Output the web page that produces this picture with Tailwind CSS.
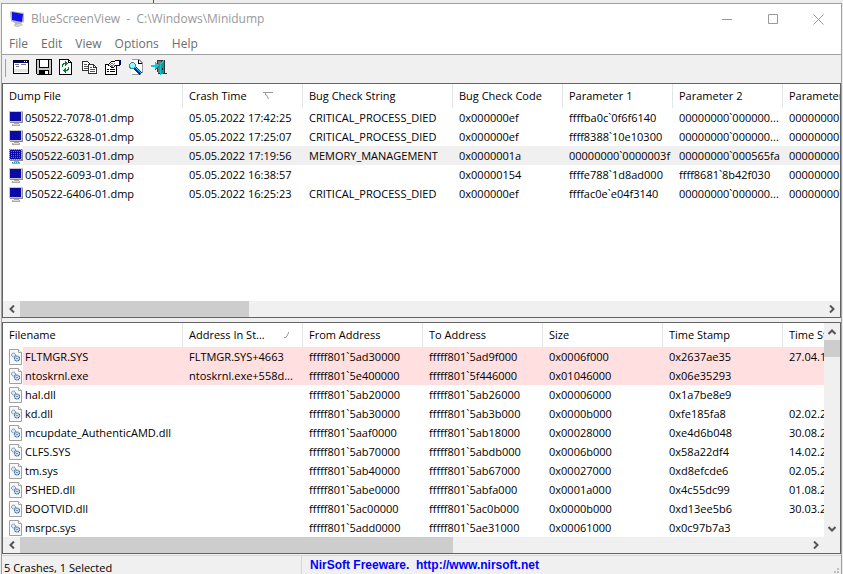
<!DOCTYPE html>
<html lang="en">
<head>
  <meta charset="UTF-8">
  <meta name="viewport" content="width=device-width, initial-scale=1.0">
  <title>BlueScreenView</title>
  <script src="https://cdn.jsdelivr.net/npm/@tailwindcss/browser@4"></script>
</head>
<body class="h-screen overflow-hidden bg-[#ececec] font-['Open_Sans',sans-serif] text-[11px] leading-4 text-black flex flex-col">
  <svg width="0" height="0" class="absolute" aria-hidden="true">
    <symbol id="monitor" viewBox="0 0 14 16">
      <path d="M0 1h14v11H0z" fill="#c9c6c0"/>
      <path d="M1 2h11v9H1z" fill="#0a0aa8"/>
      <path d="M1 12h13v1H1zM13 2h1v10h-1z" fill="#8d8b87"/>
      <path d="M5 13h5v1H5zM3 14h8v2H3z" fill="#aaa8a4"/>
      <path d="M4 14h6v1H4z" fill="#dedcd8"/>
    </symbol>
    <symbol id="monitor-selected" viewBox="0 0 14 16">
      <use href="#monitor"/>
      <path d="M0 1.5h14M0 3.5h14M0 5.5h14M0 7.5h14M0 9.5h14M0 11.5h14M3 14.5h8" stroke="#1f86dc" stroke-dasharray="1 1" fill="none"/>
    </symbol>
    <symbol id="module" viewBox="0 0 13 16">
      <path d="M.5 .5h9l3 3v12H.5z" fill="#f8f8f8" stroke="#a0a0a0"/>
      <path d="M9.500 .5v3h3" fill="#fff" stroke="#a0a0a0"/>
      <circle cx="4.500" cy="6" r="2" fill="#dcebf5" stroke="#4a76a0" stroke-dasharray="1 .5"/>
      <circle cx="8" cy="9.500" r="2.500" fill="#dcebf5" stroke="#35648f" stroke-width="1.200" stroke-dasharray="1.200 .5"/>
      <circle cx="8" cy="9.500" r=".7" fill="#35648f"/>
    </symbol>
  </svg>

  <div class="h-[3px] shrink-0 pl-[153px]"><div class="h-full w-px bg-gray-600"></div></div>

  <main class="mx-px min-h-0 flex-1 flex flex-col border border-b-0 border-[#a0a0a0] bg-[#f0f0f0]">
    <header class="bg-white">
      <div class="flex h-[30px] items-center pl-2">
        <svg width="15" height="16" viewBox="0 0 15 16" aria-hidden="true">
          <path d="M0 1l2-1 12 2v9l-3 1 2 2-5 2-4-1 1-3-4-2z" fill="#b9b9b4"/>
          <path d="M2 1l11 2-1 8-10-2z" fill="#1010e8"/>
          <path d="M5 14l5-1 2 1-4 1z" fill="#dededa"/>
        </svg>
        <h1 class="ml-[6px] flex-1 whitespace-pre text-[12px] text-[#999]">BlueScreenView  -  C:\Windows\Minidump</h1>
        <button aria-label="Minimize" class="flex h-full w-[46px] items-center justify-center"><svg width="10" height="11"><path d="M0 5.500h10" stroke="#999"/></svg></button>
        <button aria-label="Maximize" class="flex h-full w-[46px] items-center justify-center"><svg width="10" height="10"><path d="M.5 .5h9v9h-9z" fill="none" stroke="#999"/></svg></button>
        <button aria-label="Close" class="flex h-full w-[45px] items-center justify-center"><svg width="11" height="11"><path d="M.5 .5l10 10M10.500 .5l-10 10" stroke="#999"/></svg></button>
      </div>
      <nav class="flex h-5 items-center gap-[13px] pl-[7px] text-[12px] text-[#6d6d6d]">
        <button>File</button>
        <button>Edit</button>
        <button>View</button>
        <button>Options</button>
        <button>Help</button>
      </nav>
    </header>

    <div class="flex h-[29px] shrink-0 items-start border-t border-[#a0a0a0] pt-1 pl-[3px]">
      <div class="mr-[7px] h-[18px] w-px bg-[#a0a0a0]"></div>
      <div class="flex gap-[7px]">
        <button aria-label="Advanced options"><svg width="16" height="16" shape-rendering="crispEdges">
          <path d="M0 1h16v14H0z" fill="#000"/><path d="M1 2h14v12H1z" fill="#fff"/><path d="M1 2h14v2H1z" fill="#000080"/>
          <path d="M11 2h1v1h-1zM13 2h1v1h-1z" fill="#fff"/><path d="M2 5h4v1H2zM3 7h3v1H3zM8 5h5v1H8z" fill="#777"/><path d="M1 9h14v4H1z" fill="#e4e4e4"/><path d="M1 9h14v1H1z" fill="#fff"/>
        </svg></button>
        <button aria-label="Save"><svg width="16" height="16" shape-rendering="crispEdges">
          <path d="M0 0h16v16H1v-1H0z" fill="#000"/><path d="M1 1h2v8h10V1h2v14H1z" fill="#c8c8c8"/><path d="M4 1h8v7H4z" fill="#fff"/><path d="M3 11h10v5H3z" fill="#000"/><path d="M9 12h3v3H9z" fill="#fff"/>
        </svg></button>
        <button aria-label="Refresh"><svg width="16" height="16" shape-rendering="crispEdges">
          <path d="M.5 .5h9l3 3v12H.5z" fill="#fff" stroke="#000"/><path d="M9.500 0v3.500H13" fill="none" stroke="#000"/>
          <path d="M3 8V5h1V4h2V2h1v1h1v1h1v1H8v1H7v1H6V5H5v1H4v2zM10 8v3H9v1H7v2H6v-1H5v-1H4v-1h1v-1h1V9h1v2h1v-1h1V8z" fill="#008030"/>
        </svg></button>
        <button aria-label="Copy"><svg width="16" height="16" shape-rendering="crispEdges">
          <path d="M.5 2.500h5l3 3v6h-8z" fill="#fff" stroke="#333"/><path d="M2 5h3v1H2zM2 7h4v1H2zM2 9h4v1H2z" fill="#555"/>
          <path d="M6.500 5.500h5l3 3v6h-8z" fill="#fff" stroke="#333"/><path d="M11.500 5v3.500H15" fill="none" stroke="#333"/><path d="M8 8h2v1H8zM8 10h5v1H8zM8 12h5v1H8z" fill="#555"/>
        </svg></button>
        <button aria-label="Properties"><svg width="16" height="16" shape-rendering="crispEdges">
          <path d="M.5 5.500h11v10H.5z" fill="#fff" stroke="#000"/><path d="M2 10h2v1H2zM5 10h5v1H5zM2 12h2v1H2zM5 12h5v1H5z" fill="#000"/>
          <path d="M3 6l4-4h3l1-1h3v5h-3L8 9z" fill="#fff" stroke="#000"/><path d="M5 5l3 3M7 4l3 3M4 7l3-3M6 8l4-4" stroke="#777"/><path d="M14 1h2v5h-2z" fill="#000080"/>
        </svg></button>
        <button aria-label="Find"><svg width="16" height="16" shape-rendering="crispEdges">
          <path d="M3 1h8l3 3v11H3z" fill="#fff"/><path d="M4 .5h7l3 3V14M4 15.500h9" fill="none" stroke="#999"/><path d="M10.500 1v3H14" fill="none" stroke="#000"/>
          <circle cx="4.500" cy="6.500" r="3" fill="#8ff" stroke="#378a9a"/><path d="M7 9l6 6" stroke="#0030b0" stroke-width="3"/><path d="M7 8l6 6" stroke="#3cf"/>
        </svg></button>
        <button aria-label="Exit"><svg width="16" height="16" shape-rendering="crispEdges">
          <path d="M6 1h8v13h2v1H7v-2H6z" fill="#333"/><path d="M7 2h3v12H7z" fill="#777"/><path d="M13 1v13l-4 2V4z" fill="#00a0a0"/><path d="M9 4l4-3v1l-3 3v11H9z" fill="#0cc"/><path d="M11 9h1v2h-1z" fill="#000"/>
          <path d="M0 6h4V3l5 4-5 4V8H0z" fill="#00d0e0"/><path d="M4 10v1l5-4H8z" fill="#007080"/>
        </svg></button>
      </div>
    </div>

    <section class="flex min-h-0 flex-1 flex-col border border-[#646464] bg-white">
      <div class="min-h-0 flex-1 overflow-hidden">
        <table class="w-full table-fixed border-separate border-spacing-0 whitespace-nowrap text-left">
          <colgroup><col class="w-[180px]"><col class="w-[120px]"><col class="w-[150px]"><col class="w-[110px]"><col class="w-[110px]"><col class="w-[110px]"><col></colgroup>
          <thead><tr class="h-6">
            <th class="border-r border-[#e5e5e5] p-0 pl-[6px] font-normal">Dump File</th>
            <th class="border-r border-[#e5e5e5] p-0 pl-[6px] font-normal"><div class="flex items-center gap-4">Crash Time<svg width="11" height="8"><path d="M0 .5h10M2.500 1v2h1l2 4" fill="none" stroke="#999"/></svg></div></th>
            <th class="border-r border-[#e5e5e5] p-0 pl-[6px] font-normal">Bug Check String</th>
            <th class="border-r border-[#e5e5e5] p-0 pl-[6px] font-normal">Bug Check Code</th>
            <th class="border-r border-[#e5e5e5] p-0 pl-[6px] font-normal">Parameter 1</th>
            <th class="border-r border-[#e5e5e5] p-0 pl-[6px] font-normal">Parameter 2</th>
            <th class="overflow-hidden p-0 pl-[6px] font-normal">Parameter 3</th>
          </tr></thead>
          <tbody id="crashes"></tbody>
        </table>
      </div>
      <div class="flex h-4 shrink-0 bg-[#f0f0f0]">
        <button aria-label="Scroll left" class="flex w-[17px] items-center justify-center"><svg width="6" height="8"><path d="M5 .5L1.500 4 5 7.500" fill="none" stroke="#555" stroke-width="2"/></svg></button>
        <div class="flex-1"><div class="h-full w-[28.500%] bg-[#cdcdcd]"></div></div>
        <button aria-label="Scroll right" class="flex w-[17px] items-center justify-center"><svg width="6" height="8"><path d="M1 .5L4.500 4 1 7.500" fill="none" stroke="#555" stroke-width="2"/></svg></button>
      </div>
    </section>

    <section class="mt-1 flex shrink-0 flex-col border border-[#646464] bg-white">
      <div class="flex">
        <div class="min-w-0 flex-1 overflow-hidden">
          <table class="w-full table-fixed border-separate border-spacing-0 whitespace-nowrap text-left">
            <colgroup><col class="w-[180px]"><col class="w-[120px]"><col class="w-[120px]"><col class="w-[120px]"><col class="w-[120px]"><col class="w-[120px]"><col></colgroup>
            <thead><tr class="h-6">
              <th class="border-r border-[#e5e5e5] p-0 pl-[6px] font-normal">Filename</th>
              <th class="border-r border-[#e5e5e5] p-0 pl-[6px] font-normal"><div class="flex items-center gap-[18px]">Address In St...<svg width="6" height="6"><path d="M5.500 0v1L3 5.500H1" fill="none" stroke="#999"/></svg></div></th>
              <th class="border-r border-[#e5e5e5] p-0 pl-[6px] font-normal">From Address</th>
              <th class="border-r border-[#e5e5e5] p-0 pl-[6px] font-normal">To Address</th>
              <th class="border-r border-[#e5e5e5] p-0 pl-[6px] font-normal">Size</th>
              <th class="border-r border-[#e5e5e5] p-0 pl-[6px] font-normal">Time Stamp</th>
              <th class="overflow-hidden p-0 pl-[6px] font-normal">Time String</th>
            </tr></thead>
            <tbody id="modules"></tbody>
          </table>
        </div>
        <div class="flex w-4 flex-col bg-[#f0f0f0]">
          <button aria-label="Scroll up" class="flex h-[17px] items-center justify-center"><svg width="8" height="6"><path d="M.5 5L4 1.500 7.500 5" fill="none" stroke="#555" stroke-width="2"/></svg></button>
          <div class="flex-1"><div class="h-[17px] bg-[#cdcdcd]"></div></div>
          <button aria-label="Scroll down" class="flex h-[17px] items-center justify-center"><svg width="8" height="6"><path d="M.5 1L4 4.500 7.500 1" fill="none" stroke="#555" stroke-width="2"/></svg></button>
        </div>
      </div>
      <div class="flex h-4 bg-[#f0f0f0] pr-4">
        <button aria-label="Scroll left" class="flex w-[17px] items-center justify-center"><svg width="6" height="8"><path d="M5 .5L1.500 4 5 7.500" fill="none" stroke="#555" stroke-width="2"/></svg></button>
        <div class="flex-1"><div class="h-full w-[55%] bg-[#cdcdcd]"></div></div>
        <button aria-label="Scroll right" class="flex w-[17px] items-center justify-center"><svg width="6" height="8"><path d="M1 .5L4.500 4 1 7.500" fill="none" stroke="#555" stroke-width="2"/></svg></button>
      </div>
    </section>

    <footer class="mt-px flex h-[19px] shrink-0 border-t border-[#d7d7d7]">
      <div class="w-[300px] border-r border-[#d7d7d7] pt-1 pl-[2px]">5 Crashes, 1 Selected</div>
      <a href="http://www.nirsoft.net" class="flex-1 whitespace-pre pt-px pl-2 font-['Liberation_Sans',sans-serif] text-[12px] font-bold text-[#0000ff]">NirSoft Freeware.  http://www.nirsoft.net</a>
      <svg width="6" height="6" class="mr-px mt-3" fill="#bfbfbf"><path d="M3 0h2v2H3zM0 3h2v2H0zM3 3h2v2H3z"/></svg>
    </footer>
  </main>

  <script>
    const crashes = [
      ['050522-7078-01.dmp', '05.05.2022 17:42:25', 'CRITICAL_PROCESS_DIED', '0x000000ef', 'ffffba0c`0f6f6140', '00000000`000000...', '00000000`00000000'],
      ['050522-6328-01.dmp', '05.05.2022 17:25:07', 'CRITICAL_PROCESS_DIED', '0x000000ef', 'ffff8388`10e10300', '00000000`000000...', '00000000`00000000'],
      ['050522-6031-01.dmp', '05.05.2022 17:19:56', 'MEMORY_MANAGEMENT', '0x0000001a', '00000000`0000003f', '00000000`000565fa', '00000000`00000000'],
      ['050522-6093-01.dmp', '05.05.2022 16:38:57', '', '0x00000154', 'ffffe788`1d8ad000', 'ffff8681`8b42f030', '00000000`00000000'],
      ['050522-6406-01.dmp', '05.05.2022 16:25:23', 'CRITICAL_PROCESS_DIED', '0x000000ef', 'ffffac0e`e04f3140', '00000000`000000...', '00000000`00000000']
    ];
    const modules = [
      ['FLTMGR.SYS', 'FLTMGR.SYS+4663', 'fffff801`5ad30000', 'fffff801`5ad9f000', '0x0006f000', '0x2637ae35', '27.04.1990'],
      ['ntoskrnl.exe', 'ntoskrnl.exe+558d...', 'fffff801`5e400000', 'fffff801`5f446000', '0x01046000', '0x06e35293', ''],
      ['hal.dll', '', 'fffff801`5ab20000', 'fffff801`5ab26000', '0x00006000', '0x1a7be8e9', ''],
      ['kd.dll', '', 'fffff801`5ab30000', 'fffff801`5ab3b000', '0x0000b000', '0xfe185fa8', '02.02.2105'],
      ['mcupdate_AuthenticAMD.dll', '', 'fffff801`5aaf0000', 'fffff801`5ab18000', '0x00028000', '0xe4d6b048', '30.08.2091'],
      ['CLFS.SYS', '', 'fffff801`5ab70000', 'fffff801`5abdb000', '0x0006b000', '0x58a22df4', '14.02.2017'],
      ['tm.sys', '', 'fffff801`5ab40000', 'fffff801`5ab67000', '0x00027000', '0xd8efcde6', '02.05.2085'],
      ['PSHED.dll', '', 'fffff801`5abe0000', 'fffff801`5abfa000', '0x0001a000', '0x4c55dc99', '01.08.2010'],
      ['BOOTVID.dll', '', 'fffff801`5ac00000', 'fffff801`5ac0b000', '0x0000b000', '0xd13ee5b6', '30.03.2081'],
      ['msrpc.sys', '', 'fffff801`5add0000', 'fffff801`5ae31000', '0x00061000', '0x0c97b7a3', '']
    ];

    function fillRows(id, rows, icon, color) {
      document.getElementById(id).innerHTML = rows.map((row, i) => {
        const bg = color(i);
        const cells = row.slice(1).map(c => `<td class="overflow-hidden p-0 pl-[6px] ${bg}">${c}</td>`).join('');
        return `<tr class="h-[19px]">
          <td class="p-0 pl-[6px]"><div class="flex h-[19px] items-center">${icon(i)}<span class="h-full flex-1 pt-[2px] pl-[2px] ${bg}">${row[0]}</span></div></td>${cells}
        </tr>`;
      }).join('');
    }

    fillRows('crashes', crashes,
      i => `<svg width="14" height="16" shape-rendering="crispEdges"><use href="#${i === 2 ? 'monitor-selected' : 'monitor'}"/></svg>`,
      i => i === 2 ? 'bg-[#f0f0f0]' : '');
    fillRows('modules', modules,
      () => '<svg width="13" height="16" class="mr-px"><use href="#module"/></svg>',
      i => i < 2 ? 'bg-[#ffdfdf]' : '');
  </script>
</body>
</html>
